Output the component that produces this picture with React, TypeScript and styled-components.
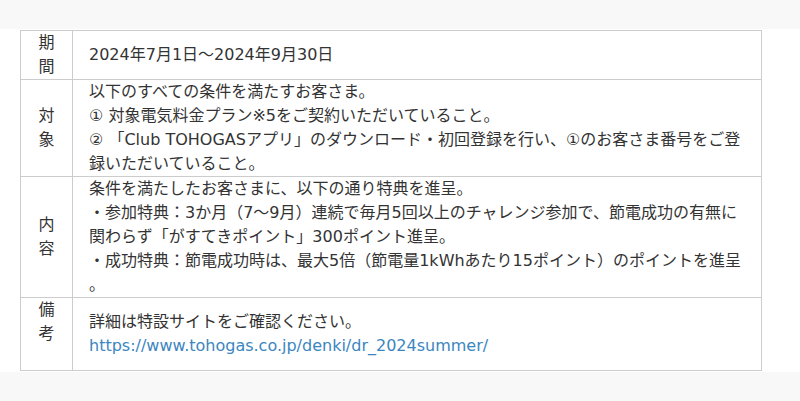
import styled, { createGlobalStyle } from 'styled-components';

const GlobalStyle = createGlobalStyle`
  html, body {
    margin: 0;
    padding: 0;
    background: #fff;
  }

  body {
    font-family: 'DejaVu Sans', 'Noto Sans CJK JP', sans-serif;
    font-size: 16px;
    color: #333;
  }
`;

interface IRow {
  head: string[];
  lines: { text: string; href?: string }[];
}

const rows: IRow[] = [
  {
    head: ['期', '間'],
    lines: [{ text: '2024年7月1日～2024年9月30日' }],
  },
  {
    head: ['対', '象'],
    lines: [
      { text: '以下のすべての条件を満たすお客さま。' },
      { text: '① 対象電気料金プラン※5をご契約いただいていること。' },
      {
        text: '② 「Club TOHOGASアプリ」のダウンロード・初回登録を行い、①のお客さま番号をご登',
      },
      { text: '録いただいていること。' },
    ],
  },
  {
    head: ['内', '容'],
    lines: [
      { text: '条件を満たしたお客さまに、以下の通り特典を進呈。' },
      {
        text: '・参加特典：3か月（7～9月）連続で毎月5回以上のチャレンジ参加で、節電成功の有無に',
      },
      { text: '関わらず「がすてきポイント」300ポイント進呈。' },
      {
        text: '・成功特典：節電成功時は、最大5倍（節電量1kWhあたり15ポイント）のポイントを進呈',
      },
      { text: '。' },
    ],
  },
  {
    head: ['備', '考', ''],
    lines: [
      { text: '詳細は特設サイトをご確認ください。' },
      {
        text: 'https://www.tohogas.co.jp/denki/dr_2024summer/',
        href: 'https://www.tohogas.co.jp/denki/dr_2024summer/',
      },
    ],
  },
];

const App = () => {
  return (
    <>
      <GlobalStyle />
      <Band />
      <Section>
        <Table>
          <tbody>
            {rows.map(({ head, lines }) => (
              <tr key={head.join('')}>
                <HeadCell>
                  {head.map((ch, i) => (
                    <Line key={i}>{ch || '\u00a0'}</Line>
                  ))}
                </HeadCell>
                <DataCell>
                  {lines.map(({ text, href }, i) =>
                    href ? (
                      <LinkLine key={i} href={href}>
                        {text}
                      </LinkLine>
                    ) : (
                      <Line key={i}>{text}</Line>
                    )
                  )}
                </DataCell>
              </tr>
            ))}
          </tbody>
        </Table>
      </Section>
      <Band $tall />
    </>
  );
};

export default App;

const Band = styled.div<{ $tall?: boolean }>`
  height: ${({ $tall }) => ($tall ? '30px' : '29px')};
  background-color: #f8f8f8;
`;

const Section = styled.section`
  padding: 1px 0 1px 20px;
  background-color: #fff;
`;

const Table = styled.table`
  width: 742px;
  border-collapse: collapse;
  line-height: 24px;

  td,
  th {
    border: 1px solid #ccc;
  }
`;

const HeadCell = styled.th`
  width: 19px;
  padding: 0 16px;
  font-weight: normal;
  text-align: center;
  vertical-align: middle;
`;

const DataCell = styled.td`
  padding: 0 16px;
  text-align: left;
  vertical-align: middle;
`;

const Line = styled.span`
  display: block;
  white-space: nowrap;
`;

const LinkLine = styled.a`
  display: block;
  white-space: nowrap;
  color: #3b86c0;
  text-decoration: none;
`;
